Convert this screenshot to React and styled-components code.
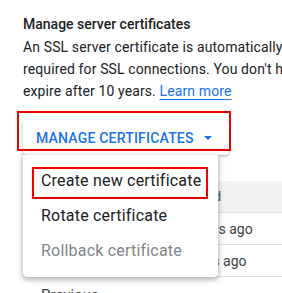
import React from 'react'
import styled, { createGlobalStyle } from 'styled-components'

const GlobalStyle = createGlobalStyle`
  html, body {
    margin: 0;
    padding: 0;
    background: #fff;
  }
  body {
    font-family: Roboto, 'Liberation Sans', sans-serif;
    -webkit-font-smoothing: antialiased;
  }
`

const rows = [
  { name: '', created: '2 hours ago' },
  { name: '', created: '3 days ago' },
]

const menuItems = [
  { label: 'Create new certificate', marked: true },
  { label: 'Rotate certificate' },
  { label: 'Rollback certificate', disabled: true },
]

const App = () => {
  return (
    <>
      <GlobalStyle />
      <Page>
        <Title>Manage server certificates</Title>
        <Text>
          <Line>An SSL server certificate is automatically created when you create your instance.</Line>
          <Line>required for SSL connections. You don't have to manage these certificates.</Line>
          <Line>
            expire after 10 years. <Link href="#">Learn more</Link>
          </Line>
        </Text>

        <Dropdown>
          <ManageButton>
            MANAGE CERTIFICATES
            <Caret width="10" height="5" viewBox="0 0 10 5">
              <path d="M0 0h10L5 5z" fill="currentColor" />
            </Caret>
          </ManageButton>
          <Marker $left={-6} $top={-9} $width={214} $height={40} />
          <Menu>
            {menuItems.map((item) => (
              <MenuItem key={item.label} $disabled={item.disabled}>
                {item.label}
                {item.marked && <Marker $left={9} $top={4} $width={176} $height={32} />}
              </MenuItem>
            ))}
          </Menu>
        </Dropdown>

        <Table>
          <HeadRow>
            <Cell />
            <HeadCell>Created</HeadCell>
          </HeadRow>
          {rows.map((row) => (
            <Row key={row.created}>
              <Cell>{row.name}</Cell>
              <Cell>{row.created}</Cell>
            </Row>
          ))}
        </Table>
        <Previous>Previous</Previous>
      </Page>
    </>
  )
}

export default App

//style
const Page = styled.div`
  width: 282px;
  height: 293px;
  box-sizing: border-box;
  padding: 14px 0 0 23px;
  overflow: hidden;
  position: relative;
`

const Title = styled.div`
  font-size: 14px;
  font-weight: 500;
  line-height: 20px;
  color: #202124;
`

const Text = styled.div`
  margin-top: 2px;
  font-size: 14px;
  line-height: 22px;
  letter-spacing: 0.12px;
  color: #202124;
`

const Line = styled.div`
  white-space: nowrap;
`

const Link = styled.a`
  color: #1a73e8;
  text-decoration: underline;
  text-underline-offset: 3px;
  text-decoration-thickness: 1px;
`

const Dropdown = styled.div`
  position: relative;
  margin-top: 18px;
  width: 206px;
`

const ManageButton = styled.div`
  display: flex;
  align-items: center;
  height: 35px;
  box-sizing: border-box;
  padding: 0 0 0 13px;
  background: #fff;
  border-radius: 4px;
  box-shadow: 0 1px 2px rgba(60, 64, 67, 0.3), 0 1px 3px 1px rgba(60, 64, 67, 0.12);
  color: #1a73e8;
  font-size: 14px;
  font-weight: 500;
  letter-spacing: 0.2px;
`

const Caret = styled.svg`
  margin-left: 10px;
  width: 8px;
  height: 4px;
`

const Marker = styled.div`
  position: absolute;
  left: ${(p) => p.$left}px;
  top: ${(p) => p.$top}px;
  width: ${(p) => p.$width}px;
  height: ${(p) => p.$height}px;
  box-sizing: border-box;
  border: 2px solid #ee0000;
  pointer-events: none;
  z-index: 3;
`

const Menu = styled.div`
  position: absolute;
  top: 35px;
  left: 0;
  width: 195px;
  padding: 8px 0 9px;
  background: #fff;
  border-radius: 0 0 4px 4px;
  box-shadow: 0 2px 4px rgba(60, 64, 67, 0.3), 0 2px 6px 2px rgba(60, 64, 67, 0.15);
  z-index: 2;
`

const MenuItem = styled.div`
  position: relative;
  display: flex;
  align-items: center;
  height: 35px;
  padding-left: 18px;
  font-size: 16px;
  letter-spacing: 0.2px;
  color: ${(p) => (p.$disabled ? '#80868b' : '#202124')};
  white-space: nowrap;
`

const Table = styled.div`
  margin-top: 26px;
  width: 300px;
`

const HeadRow = styled.div`
  display: grid;
  grid-template-columns: 156px 1fr;
  align-items: center;
  height: 31px;
  background: #f1f3f4;
`

const Row = styled.div`
  display: grid;
  grid-template-columns: 156px 1fr;
  align-items: center;
  height: 31px;
  border-top: 1px solid #e0e0e0;
  &:last-child {
    border-bottom: 1px solid #e0e0e0;
  }
`

const Cell = styled.div`
  font-size: 14px;
  color: #3c4043;
  white-space: nowrap;
`

const HeadCell = styled.div`
  font-size: 12px;
  font-weight: 500;
  color: #5f6368;
`

const Previous = styled.div`
  margin-top: 9px;
  padding-left: 18px;
  font-size: 15px;
  color: #3c4043;
`
